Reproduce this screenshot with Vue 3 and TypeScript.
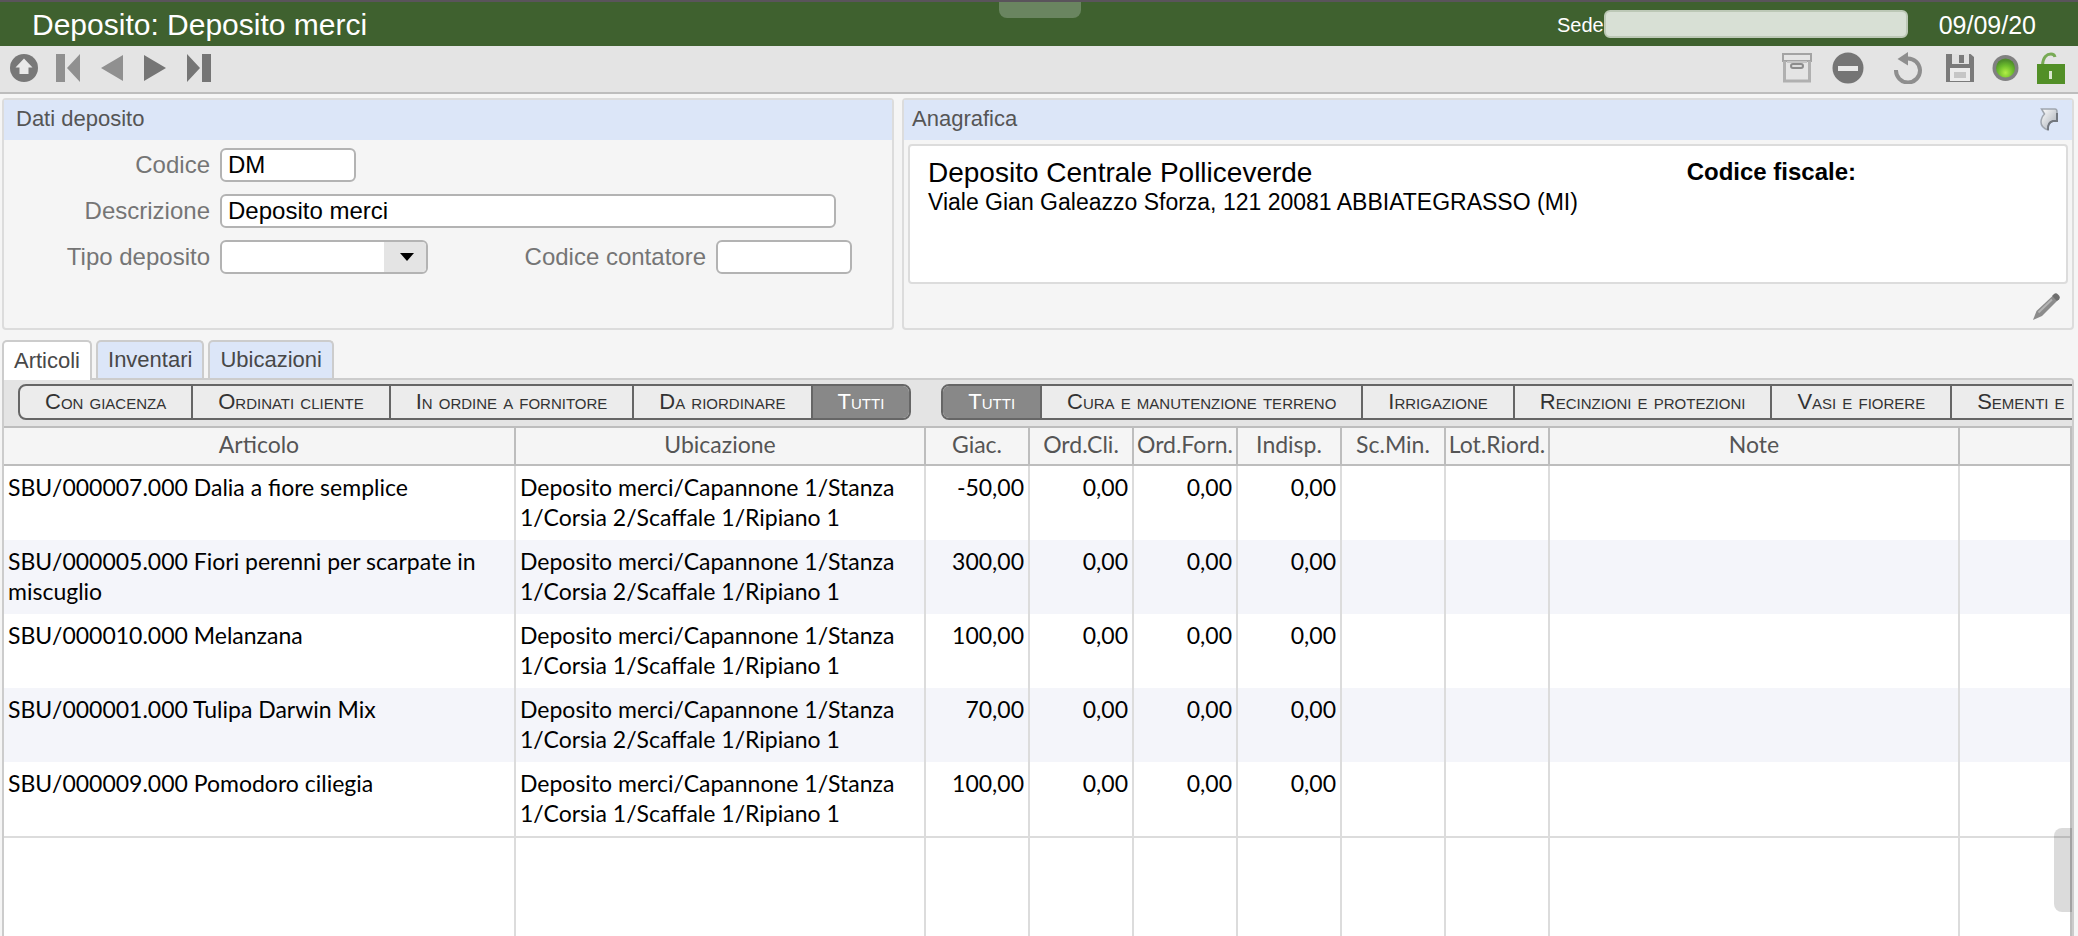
<script setup lang="ts">
import { ref } from 'vue'

interface Row {
  articolo: string
  ubicazione: string
  giac: string
}

const codice = ref('DM')
const descrizione = ref('Deposito merci')
const tipo = ref('')
const contatore = ref('')
const sede = ref('')

const tabs = ['Articoli', 'Inventari', 'Ubicazioni']
const activeTab = ref('Articoli')

const statusFilters = ['Con giacenza', 'Ordinati cliente', 'In ordine a fornitore', 'Da riordinare', 'Tutti']
const activeStatus = ref('Tutti')

const categoryFilters = [
  'Tutti',
  'Cura e manutenzione terreno',
  'Irrigazione',
  'Recinzioni e protezioni',
  'Vasi e fiorere',
  'Sementi e',
]
const activeCategory = ref('Tutti')

const columns = ['Articolo', 'Ubicazione', 'Giac.', 'Ord.Cli.', 'Ord.Forn.', 'Indisp.', 'Sc.Min.', 'Lot.Riord.', 'Note', '']

const shelf = (corsia: number) => `Deposito merci/Capannone 1/Stanza 1/Corsia ${corsia}/Scaffale 1/Ripiano 1`

const rows: Row[] = [
  { articolo: 'SBU/000007.000 Dalia a fiore semplice', ubicazione: shelf(2), giac: '-50,00' },
  { articolo: 'SBU/000005.000 Fiori perenni per scarpate in miscuglio', ubicazione: shelf(2), giac: '300,00' },
  { articolo: 'SBU/000010.000 Melanzana', ubicazione: shelf(1), giac: '100,00' },
  { articolo: 'SBU/000001.000 Tulipa Darwin Mix', ubicazione: shelf(2), giac: '70,00' },
  { articolo: 'SBU/000009.000 Pomodoro ciliegia', ubicazione: shelf(1), giac: '100,00' },
]
</script>

<template>
  <div class="page">
    <header class="titlebar">
      <h1>Deposito: Deposito merci</h1>
      <div class="handle"></div>
      <div class="titlebar-right">
        <label for="sede">Sede</label>
        <input id="sede" v-model="sede" type="text" class="sede" />
        <span class="date">09/09/20</span>
      </div>
    </header>

    <nav class="toolbar">
      <div class="tools tools-left">
        <button type="button" class="up" aria-label="Su">
          <svg width="28" height="28" viewBox="0 0 28 28">
            <circle cx="14" cy="14" r="14" fill="#787878" />
            <path d="M14 4.500 L22.500 13.500 H18.500 V20 H9.500 V13.500 H5.500 Z" fill="#e8e8e8" />
          </svg>
        </button>
        <button type="button" aria-label="Primo">
          <svg width="24" height="28" viewBox="0 0 24 28">
            <path d="M0 0h9v28H0z M24 0v28L11 14z" fill="#909090" />
          </svg>
        </button>
        <button type="button" aria-label="Precedente">
          <svg width="22" height="28" viewBox="0 0 22 28"><path d="M22 1v26L0 14z" fill="#909090" /></svg>
        </button>
        <button type="button" aria-label="Successivo">
          <svg width="22" height="28" viewBox="0 0 22 28"><path d="M0 1v26l22-13z" fill="#757575" /></svg>
        </button>
        <button type="button" aria-label="Ultimo">
          <svg width="24" height="28" viewBox="0 0 24 28">
            <path d="M15 0h9v28h-9z M0 0v28l13-14z" fill="#757575" />
          </svg>
        </button>
      </div>
      <div class="tools">
        <button type="button" aria-label="Archivia">
          <svg width="30" height="30" viewBox="0 0 30 30">
            <path d="M1 1h28v7H1z" fill="#e4e4e4" stroke="#a3a3a3" stroke-width="2" />
            <path d="M2.500 8v20h25V8" fill="none" stroke="#b0b0b0" stroke-width="3" />
            <path d="M5 9h20" stroke="#c4c4c4" stroke-width="2" />
            <rect x="9" y="11" width="12" height="4" rx="2" fill="#dcdcdc" stroke="#8c8c8c" stroke-width="2" />
          </svg>
        </button>
        <button type="button" class="gap-a" aria-label="Elimina">
          <svg width="32" height="32" viewBox="0 0 32 32">
            <circle cx="16" cy="16" r="15.500" fill="#757575" />
            <rect x="6" y="14" width="20" height="5" fill="#e8e8e8" />
          </svg>
        </button>
        <button type="button" class="gap-b" aria-label="Ripristina">
          <svg width="28" height="32" viewBox="0 0 28 32">
            <path d="M2 18 A12 12 0 1 0 13 6.500" fill="none" stroke="#8e8e8e" stroke-width="4" />
            <path d="M14 0 L3.500 7 L14 13.500 Z" fill="#8e8e8e" />
          </svg>
        </button>
        <button type="button" class="gap-c" aria-label="Salva">
          <svg width="28" height="28" viewBox="0 0 28 28">
            <path d="M0 0h24.500L28 3v25H0z" fill="#7a7a7a" />
            <rect x="6" y="0" width="17" height="10" fill="#e0e0e0" />
            <rect x="13" y="1" width="5" height="8" fill="#7a7a7a" />
            <rect x="4" y="14" width="20" height="13" fill="#ececec" />
            <rect x="8" y="18" width="12" height="6" fill="#c6c6c6" />
          </svg>
        </button>
        <button type="button" class="gap-d" aria-label="Stato">
          <svg width="27" height="28" viewBox="0 0 27 28">
            <defs>
              <radialGradient id="led" cx="0.5" cy="0.75" r="0.65">
                <stop offset="0" stop-color="#b2ef45" />
                <stop offset="0.600" stop-color="#6cbc2c" />
                <stop offset="1" stop-color="#4f8f2a" />
              </radialGradient>
            </defs>
            <circle cx="13.500" cy="14" r="13" fill="#808080" />
            <circle cx="13.500" cy="14" r="9.500" fill="url(#led)" />
          </svg>
        </button>
        <button type="button" class="gap-d" aria-label="Sblocca">
          <svg width="28" height="32" viewBox="0 0 28 32">
            <path d="M5.500 13 C6 5 10 2 14 2 C16 2 17.500 3 18 5" fill="none" stroke="#78aa55" stroke-width="3" />
            <rect x="0" y="12" width="28" height="20" fill="#528f27" />
            <path d="M12 19h3v8h-3z" fill="#dbe8d0" />
          </svg>
        </button>
      </div>
    </nav>

    <div class="panels">
      <section class="panel">
        <h2 class="wide">Dati deposito</h2>
        <form class="form" @submit.prevent>
          <label for="codice">Codice</label>
          <div class="field"><input id="codice" v-model="codice" type="text" class="short" /></div>
          <label for="descrizione">Descrizione</label>
          <div class="field"><input id="descrizione" v-model="descrizione" type="text" class="long" /></div>
          <label for="tipo">Tipo deposito</label>
          <div class="field">
            <div class="combo">
              <select id="tipo" v-model="tipo">
                <option value=""></option>
              </select>
              <span class="combo-arrow">
                <svg width="14" height="8" viewBox="0 0 14 8"><path d="M0 0h14L7 8z" fill="#000" /></svg>
              </span>
            </div>
            <label for="contatore" class="second">Codice contatore</label>
            <input id="contatore" v-model="contatore" type="text" class="short" />
          </div>
        </form>
      </section>

      <section class="panel">
        <h2>
          Anagrafica
          <button type="button" aria-label="Apri">
            <svg width="18" height="24" viewBox="0 0 18 24">
              <defs>
                <linearGradient id="jump" x1="0" y1="0" x2="1" y2="1">
                  <stop offset="0" stop-color="#ffffff" />
                  <stop offset="1" stop-color="#a4aab2" />
                </linearGradient>
              </defs>
              <path d="M1.500 2 H15 Q17 2 17 5 V14 H13 C9.500 15 7.500 18 8 23 C2.500 21 0 17 1.500 12 C2 10 3 8.500 4.500 7 Z" fill="url(#jump)" stroke="#a0a6ae" stroke-width="1.500" />
              <path d="M17 6 V14 H13 C9.500 15 7.500 18 8 23" fill="none" stroke="#72777e" stroke-width="2" />
            </svg>
          </button>
        </h2>
        <div class="card">
          <div>
            <div class="card-name">Deposito Centrale Polliceverde</div>
            <div class="card-address">Viale Gian Galeazzo Sforza, 121 20081 ABBIATEGRASSO (MI)</div>
          </div>
          <strong>Codice fiscale:</strong>
        </div>
        <div class="card-foot">
          <button type="button" aria-label="Modifica">
            <svg width="28" height="28" viewBox="0 0 28 28">
              <path d="M1 27 L4.500 18 L20.500 3 L25.500 7.500 L10 23 Z" fill="#8c8c8c" />
              <path d="M6.500 19.500 L20 6.500" stroke="#b4b4b4" stroke-width="2" />
              <path d="M20 3 L22 1 Q24 -0.500 26 1.500 L27 2.500 Q28.500 4.500 27 6.500 L25 8 Z" fill="#6f6f6f" />
            </svg>
          </button>
        </div>
      </section>
    </div>

    <div class="tabs" role="tablist">
      <button
        v-for="tab in tabs"
        :key="tab"
        type="button"
        role="tab"
        class="tab"
        :class="{ active: tab === activeTab }"
        :aria-selected="tab === activeTab"
        @click="activeTab = tab"
      >{{ tab }}</button>
    </div>

    <main class="sheet">
      <div class="filters">
        <div class="segmented">
          <button
            v-for="item in statusFilters"
            :key="item"
            type="button"
            :class="{ on: item === activeStatus }"
            @click="activeStatus = item"
          >{{ item }}</button>
        </div>
        <div class="segmented">
          <button
            v-for="item in categoryFilters"
            :key="item"
            type="button"
            :class="{ on: item === activeCategory }"
            @click="activeCategory = item"
          >{{ item }}</button>
        </div>
      </div>

      <div class="grid">
        <table>
          <colgroup>
            <col class="c-text" />
            <col class="c-place" />
            <col v-for="n in 6" :key="n" class="c-num" />
            <col class="c-place" />
            <col />
          </colgroup>
          <thead>
            <tr>
              <th v-for="(col, i) in columns" :key="i" scope="col">{{ col }}</th>
            </tr>
          </thead>
          <tbody>
            <tr v-for="row in rows" :key="row.articolo" class="row">
              <td>{{ row.articolo }}</td>
              <td>{{ row.ubicazione }}</td>
              <td class="num">{{ row.giac }}</td>
              <td class="num">0,00</td>
              <td class="num">0,00</td>
              <td class="num">0,00</td>
              <td></td>
              <td></td>
              <td></td>
              <td></td>
            </tr>
            <tr class="filler">
              <td v-for="(col, i) in columns" :key="i"></td>
            </tr>
          </tbody>
        </table>
      </div>
      <div class="thumb"></div>
    </main>
  </div>
</template>

<style>
body {
  margin: 0;
  overflow: hidden;
}
</style>

<style scoped>
.page {
  display: flex;
  flex-direction: column;
  height: 100vh;
  overflow: hidden;
  box-sizing: border-box;
  background: #f5f5f5;
  color: #000;
  font-family: "Liberation Sans", Arial, sans-serif;
  font-size: 24px;
}
.page *,
.page *::before {
  box-sizing: border-box;
}
button {
  margin: 0;
  padding: 0;
  border: 0;
  background: none;
  color: inherit;
  font: inherit;
}
svg {
  display: block;
}

.titlebar {
  position: relative;
  display: flex;
  align-items: center;
  justify-content: space-between;
  flex: none;
  height: 46px;
  padding: 2px 42px 0 32px;
  border-top: 2px solid #5a545b;
  background: #3f612f;
  color: #fff;
}
h1 {
  margin: 0;
  font-size: 30px;
  font-weight: 400;
  line-height: 40px;
}
.handle {
  position: absolute;
  top: 0;
  left: 50%;
  width: 82px;
  height: 16px;
  margin-left: -40px;
  border-radius: 0 0 8px 8px;
  background: #6a8560;
}
.titlebar-right {
  display: flex;
  align-items: center;
}
.titlebar-right label {
  font-size: 20px;
}
.sede {
  width: 304px;
  height: 28px;
  margin: 0 31px 2px 0;
  border: 2px solid #bcc8b6;
  border-radius: 6px;
  background: #d8e0d5;
}
.date {
  font-size: 25px;
}

.toolbar {
  display: flex;
  justify-content: space-between;
  flex: none;
  height: 48px;
  padding: 0 13px 2px 10px;
  border-bottom: 2px solid #bdbdbd;
  background: #e4e4e4;
}
.tools {
  display: flex;
  align-items: center;
}
.tools-left {
  gap: 21px;
}
.up {
  margin-right: -3px;
}
.gap-a {
  margin-left: 20px;
}
.gap-b {
  margin-left: 30px;
}
.gap-c {
  margin-left: 24px;
}
.gap-d {
  margin-left: 18px;
}

.panels {
  display: grid;
  grid-template-columns: 892fr 1172fr;
  gap: 8px;
  flex: none;
  padding: 4px 4px 0 2px;
}
.panel {
  border: 2px solid #dcdcdc;
  border-radius: 4px;
  min-width: 0;
}
h2 {
  display: flex;
  align-items: center;
  justify-content: space-between;
  height: 40px;
  margin: 0;
  padding: 0 14px 2px 8px;
  background: #dce6f8;
  color: #555;
  font-size: 22px;
  font-weight: 400;
}
h2.wide {
  padding-left: 12px;
}
.form {
  display: grid;
  grid-template-columns: 206px 1fr;
  column-gap: 10px;
  row-gap: 12px;
  align-items: center;
  padding-top: 8px;
}
.form label {
  color: #757575;
  text-align: right;
  line-height: 34px;
}
.field {
  display: flex;
  height: 34px;
}
.form input,
.form select {
  height: 34px;
  padding: 0 6px;
  border: 2px solid #b3b3b3;
  border-radius: 6px;
  background: #fff;
  color: #000;
  font: inherit;
}
.form .short {
  width: 136px;
}
.form .long {
  width: 616px;
}
.combo {
  position: relative;
  width: 208px;
}
.combo select {
  width: 100%;
  appearance: none;
}
.combo-arrow {
  position: absolute;
  top: 2px;
  right: 2px;
  bottom: 2px;
  display: flex;
  align-items: center;
  justify-content: center;
  width: 42px;
  padding-left: 4px;
  border-radius: 0 4px 4px 0;
  background: #e4e4e4;
  pointer-events: none;
}
.form .second {
  width: 278px;
  margin-right: 10px;
}
.card {
  display: grid;
  grid-template-columns: 2fr 1fr;
  height: 140px;
  margin: 4px 4px 0;
  padding: 11px 0 0 18px;
  border: 2px solid #dcdcdc;
  border-radius: 4px;
  background: #fff;
}
.card-name {
  font-size: 28px;
  line-height: 32px;
}
.card-address {
  font-size: 23px;
  line-height: 26px;
}
.card strong {
  line-height: 30px;
}
.card-foot {
  display: flex;
  align-items: center;
  justify-content: flex-end;
  height: 44px;
  padding: 2px 12px 0 0;
}

.tabs {
  display: flex;
  gap: 4px;
  flex: none;
  padding: 10px 0 0 2px;
}
.tab {
  height: 38px;
  padding: 0 10px;
  border: 2px solid #ccc;
  border-bottom: 0;
  border-radius: 5px 5px 0 0;
  background: #dce6f8;
  color: #484848;
  font-size: 22px;
}
.tab.active {
  position: relative;
  z-index: 1;
  height: 40px;
  margin-bottom: -2px;
  background: #fff;
}

.sheet {
  position: relative;
  display: flex;
  flex-direction: column;
  flex: 1;
  min-height: 0;
  margin: 0 4px 0 2px;
  border: 2px solid #ccc;
  border-bottom: 0;
  border-radius: 0 4px 0 0;
}
.filters {
  display: flex;
  flex: none;
  gap: 30px;
  height: 46px;
  padding: 4px 0 0 14px;
  overflow: hidden;
  background: #e4e4e4;
}
.segmented {
  display: flex;
  flex: none;
  height: 36px;
  border: 2px solid #666;
  border-radius: 8px;
  background: #ececec;
  overflow: hidden;
}
.segmented button {
  padding: 0 25px;
  border-left: 2px solid #666;
  color: #333;
  font-size: 22px;
  font-variant: small-caps;
  line-height: 32px;
  white-space: nowrap;
}
.segmented button:first-child {
  border-left: 0;
}
.segmented .on {
  background: #888;
  color: #fff;
}

.grid {
  flex: 1;
  min-height: 0;
  border-top: 2px solid #bdbdbd;
  border-right: 2px solid #bdbdbd;
  background: #fff;
  font-family: Lato, "Noto Sans", sans-serif;
  font-size: 23px;
  line-height: 30px;
}
table {
  width: 100%;
  height: 100%;
  table-layout: fixed;
  border-collapse: separate;
  border-spacing: 0;
}
.c-text {
  width: 512px;
}
.c-place {
  width: 410px;
}
.c-num {
  width: 104px;
}
th {
  height: 38px;
  padding: 0 0 5px;
  border-right: 2px solid #bdbdbd;
  border-bottom: 2px solid #bdbdbd;
  background: #f5f5f5;
  color: #555;
  font-weight: 400;
  white-space: nowrap;
}
td {
  padding: 6px 4px;
  border-right: 2px solid #dcdcdc;
  vertical-align: top;
}
th:last-child,
td:last-child {
  border-right: 0;
}
.row td {
  height: 74px;
}
.row:nth-child(even) td {
  background: #f4f5fa;
}
.num {
  text-align: right;
}
.filler td {
  border-top: 2px solid #dcdcdc;
}
.thumb {
  position: absolute;
  right: 0;
  bottom: 24px;
  width: 18px;
  height: 84px;
  border-radius: 8px 0 0 8px;
  background: rgba(0, 0, 0, 0.14);
}
</style>
